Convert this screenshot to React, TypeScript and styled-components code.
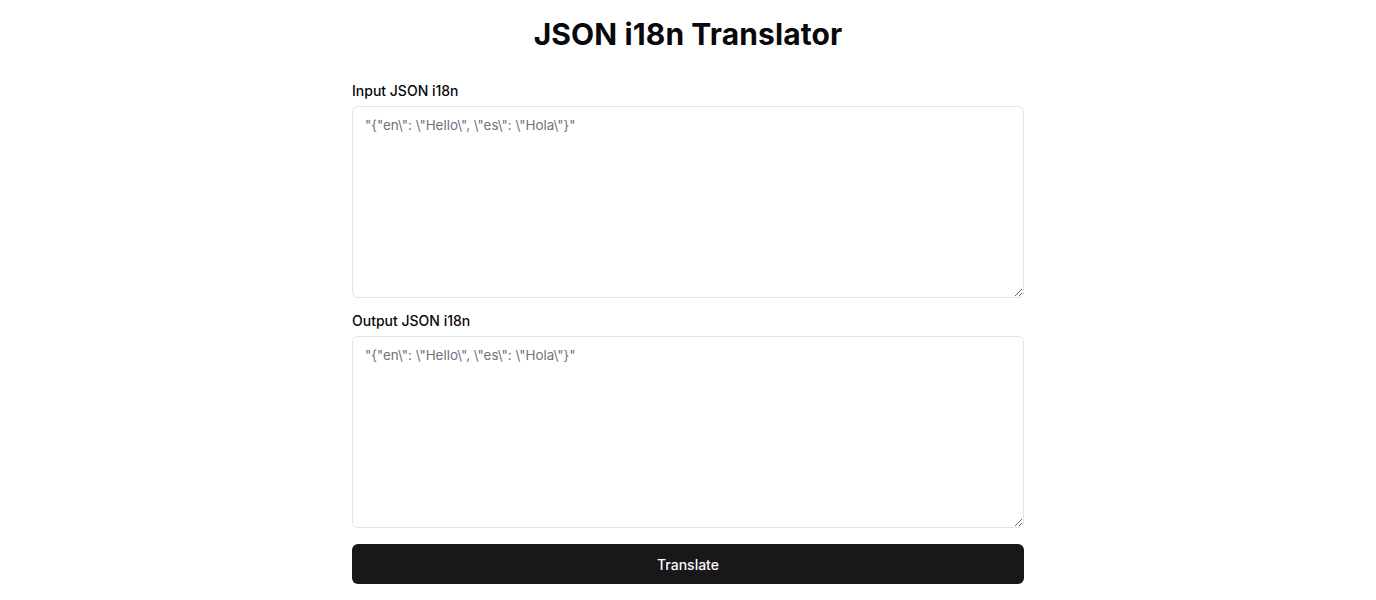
import * as React from "react"
import styled, { createGlobalStyle } from "styled-components"

const GlobalStyle = createGlobalStyle`
    * {
        box-sizing: border-box;
    }
    body {
        margin: 0;
        background: #ffffff;
        font-family: Inter, "Noto Sans", sans-serif;
        color: #09090b;
    }
`

const Page = styled.main`
    max-width: 672px;
    margin: 0 auto;
    padding-top: 16px;
`

const Title = styled.h1`
    margin: 0 0 29px;
    font-size: 30px;
    line-height: 36px;
    font-weight: 700;
    text-align: center;
    letter-spacing: 0.1px;
`

const Field = styled.div`
    display: flex;
    flex-direction: column;
    margin-bottom: 13px;
`

const Label = styled.label`
    font-size: 14px;
    line-height: 20px;
    font-weight: 500;
    margin-bottom: 5px;
`

const TextArea = styled.textarea`
    width: 100%;
    height: 192px;
    padding: 8px 12px;
    border: 1px solid #e4e4e7;
    border-radius: 6px;
    font-family: Inter, "Noto Sans", sans-serif;
    font-size: 13.4px;
    line-height: 20px;
    color: #09090b;
    background: #ffffff;
    resize: vertical;
    outline: none;

    &::placeholder {
        color: #71717a;
    }
`

// margin collapses with the field above, so 16px is the real gap
const Button = styled.button`
    display: block;
    width: 100%;
    height: 40px;
    margin-top: 16px;
    border: none;
    border-radius: 6px;
    background: #18181b;
    color: #fafafa;
    font-family: Inter, "Noto Sans", sans-serif;
    font-size: 14px;
    font-weight: 500;
    cursor: pointer;
`

const PLACEHOLDER = '"{"en\\": \\"Hello\\", \\"es\\": \\"Hola\\"}"'

export default function App() {
    const [input, setInput] = React.useState("")
    const [output, setOutput] = React.useState("")

    return (
        <>
            <GlobalStyle />
            <Page>
                <Title>JSON i18n Translator</Title>
                <Field>
                    <Label htmlFor="input">Input JSON i18n</Label>
                    <TextArea
                        id="input"
                        placeholder={PLACEHOLDER}
                        value={input}
                        onChange={e => setInput(e.target.value)}
                    />
                </Field>
                <Field>
                    <Label htmlFor="output">Output JSON i18n</Label>
                    <TextArea
                        id="output"
                        placeholder={PLACEHOLDER}
                        value={output}
                        onChange={e => setOutput(e.target.value)}
                    />
                </Field>
                <Button onClick={() => setOutput(input)}>Translate</Button>
            </Page>
        </>
    )
}
